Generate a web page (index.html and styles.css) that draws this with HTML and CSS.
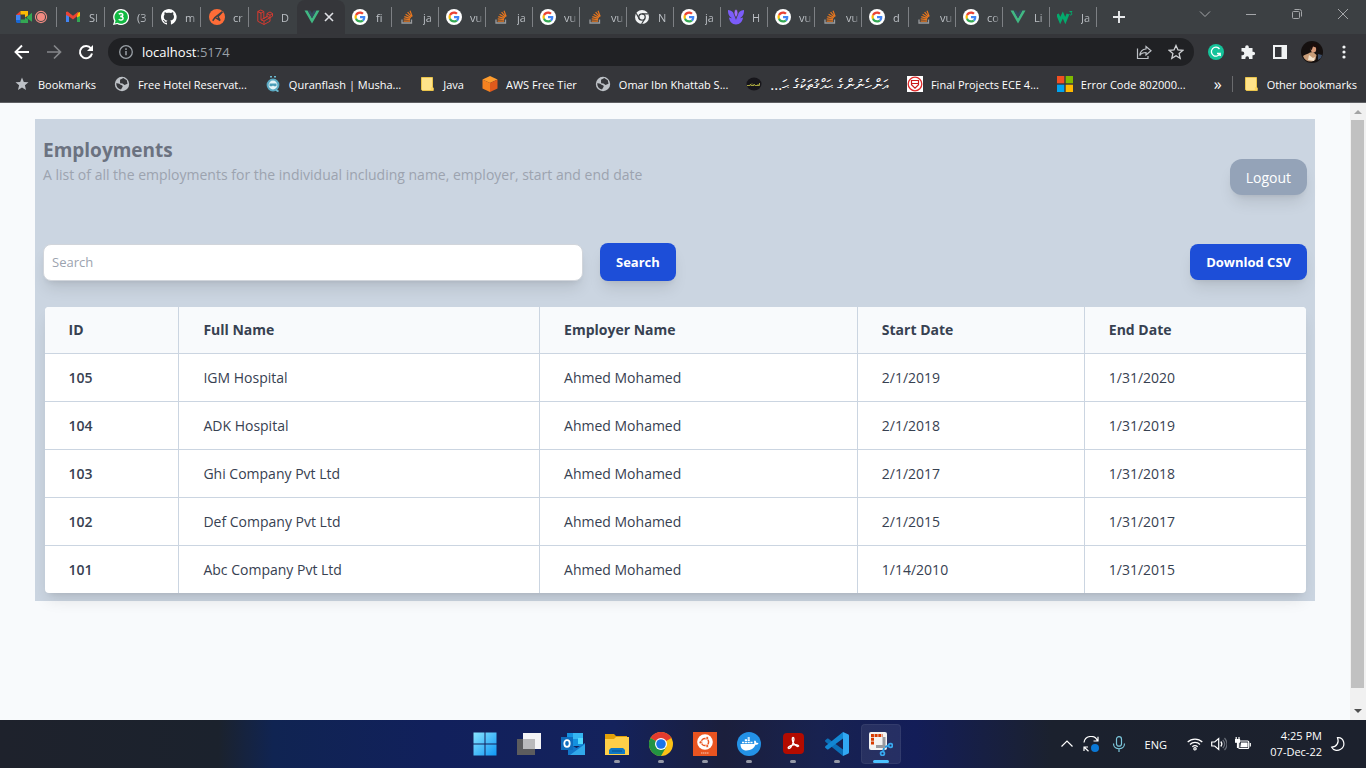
FILE: index.html
```html
<!DOCTYPE html>
<html lang="en">
<head>
<meta charset="utf-8">
<title>Employments</title>
<link rel="stylesheet" href="styles.css">
</head>
<body>
<svg class="defs" aria-hidden="true">
  <symbol id="google" viewBox="0 0 16 16"><circle cx="8" cy="8" r="8" fill="#fff"/><g transform="translate(2.500 2.500) scale(.230)"><path fill="#ea4335" d="M24 9.500c3.540 0 6.710 1.220 9.210 3.600l6.850-6.850C35.900 2.380 30.470 0 24 0 14.620 0 6.510 5.380 2.560 13.220l7.980 6.190C12.430 13.720 17.740 9.500 24 9.500z"/><path fill="#4285f4" d="M46.980 24.550c0-1.570-.15-3.090-.38-4.550H24v9.020h12.940c-.58 2.960-2.260 5.480-4.780 7.180l7.730 6c4.510-4.180 7.090-10.360 7.090-17.650z"/><path fill="#fbbc05" d="M10.530 28.590c-.48-1.450-.76-2.990-.76-4.590s.27-3.140.76-4.590l-7.980-6.190C.920 16.460 0 20.120 0 24c0 3.880.92 7.540 2.560 10.780l7.970-6.190z"/><path fill="#34a853" d="M24 48c6.480 0 11.930-2.130 15.890-5.810l-7.730-6c-2.150 1.450-4.920 2.300-8.160 2.300-6.260 0-11.570-4.220-13.470-9.910l-7.980 6.190C6.510 42.620 14.620 48 24 48z"/></g></symbol>
  <symbol id="stack" viewBox="0 0 16 16"><path d="M3 10.500V14h9.500v-3.500" fill="none" stroke="#9a9c9f" stroke-width="1.300"/><g stroke="#e8771f" stroke-width="1.200"><path d="M4.600 12.100h6.400M4.700 9.900l6.300.8M5.300 7.600l6 1.800M6.600 5.300l5.400 3.200M8.600 3.200l4.100 4.700M11 1.800l2.200 5.700"/></g></symbol>
  <symbol id="vue" viewBox="0 0 16 16"><path d="M.500 1.500H3.600L8 9.200l4.400-7.700h3.100L8 14.600z" fill="#41b883"/><path d="M3.600 1.500h2.700L8 4.500l1.700-3h2.700L8 9.200z" fill="#34495e"/></symbol>
  <symbol id="globe" viewBox="0 0 16 16"><circle cx="8" cy="8" r="7.200" fill="#bdc1c6"/><path d="M2.200 7.200c2.200-.3 3.600.7 4.900 1.800 1.400.3 2 1 1.400 2.100L7 13.600C4 13 2.100 10.500 2.200 7.200zM6 3.700l3.300-1.600 3.500 2.100.7 3.500-3 1.300-2-1.500-2.400-.3z" fill="#35363a"/></symbol>
  <symbol id="folder" viewBox="0 0 16 16"><path d="M2.500 1.500h11v9.700l.8.8v2.500h-11l-.8-.8z" fill="#ffe38a" stroke="#eac44b"/><path d="M11.800 11.200h2v3h-2z" fill="#ffd65e"/></symbol>
</svg>

<header class="browser">
  <nav class="tabs" aria-label="Tabs">
    <button class="tab tab-first" aria-label="Meet"><svg viewBox="0 0 16 16"><path d="M0 6l4.500-4v4z" fill="#ea4335"/><path d="M4.500 2H12v4.500L9 8.500V5.500H4.500z" fill="#fbbc04"/><path d="M0 6h4.500v5H0z" fill="#4285f4"/><path d="M0 11h4.500v3H1l-1-1z" fill="#1967d2"/><path d="M4.500 10.500H9v-2l3 2V14H4.500zM11 7.700l5-4v9l-5-3.400z" fill="#34a853"/></svg><svg viewBox="0 0 16 16"><circle cx="8" cy="8" r="5.600" fill="none" stroke="#f28b82" stroke-width="1.100"/><circle cx="8" cy="8" r="4" fill="#f28b82"/></svg></button>
    <button class="tab wide"><svg viewBox="0 0 16 16"><path d="M1 3v10h3V6z" fill="#4285f4"/><path d="M15 3v10h-3V6z" fill="#34a853"/><path d="M12 4l3-1v4l-3 1.500z" fill="#fbbc04"/><path d="M1 3l1.500-.6L8 6.800l5.500-4.400L12 7.300 8 10.500 4 7.500 1 6z" fill="#ea4335"/></svg><span>SI</span></button>
    <button class="tab wide"><svg viewBox="0 0 16 16"><path d="M8 0a8 8 0 1 1-3.800 15L0 16l1.200-4A8 8 0 0 1 8 0z" fill="#fff"/><path d="M8 1.200a6.800 6.800 0 1 1-3.500 12.600L1.800 14.400l.8-2.700A6.800 6.800 0 0 1 8 1.200z" fill="#12b942"/><path d="M5.800 5.200C7 4 10 4.200 9.800 6c-.1 1.300-1.300 1.500-2.600 1.500 1.500 0 2.900.4 2.900 1.800 0 2-3 2.300-4.400 1" fill="none" stroke="#fff" stroke-width="1.500"/></svg><span>(3</span></button>
    <button class="tab wide"><svg viewBox="0 0 16 16"><path fill="#fff" d="M8 0C3.600 0 0 3.600 0 8c0 3.500 2.300 6.500 5.500 7.600.4.100.5-.2.500-.4v-1.500c-2 .4-2.700-.5-2.900-1-.1-.2-.5-1-.8-1.100-.3-.2-.7-.5 0-.5s1.100.6 1.200.8c.7 1.200 1.900.9 2.400.7.100-.5.300-.9.500-1.100-1.800-.2-3.600-.9-3.600-4 0-.9.300-1.600.8-2.100-.1-.2-.4-1 .1-2.100 0 0 .7-.2 2.200.8.600-.2 1.300-.3 2-.3s1.400.1 2 .3c1.500-1 2.200-.8 2.200-.8.400 1.100.2 1.900.1 2.100.5.600.8 1.300.8 2.100 0 3.100-1.900 3.700-3.700 3.900.3.300.6.800.6 1.500v2.200c0 .2.100.5.500.4A8 8 0 0 0 8 0z"/></svg><span>m</span></button>
    <button class="tab wide"><svg viewBox="0 0 16 16"><circle cx="8" cy="8" r="8" fill="#ff6c37"/><path d="M13.500 2.700L6.200 8.300M6.200 8.300l5 3.200M11.200 11.500L9 7.500M9 7.500l4.500-4.800M6.200 8.300l-2.500 3.500" fill="none" stroke="#3c4043" stroke-width="1.500"/></svg><span>cr</span></button>
    <button class="tab wide no-line"><svg viewBox="0 0 16 16" fill="none" stroke="#d23a30" stroke-width="1"><path d="M.800 2.500l3-1.500 3 1.500v7L10 7.500M.800 2.500v9.800L7 15.500l6-3.200V8.700l2.500-1.500V4.500L13 3 10 4.500v3l-6 3.400V4.200zM4 4.200l2.800-1.700M.800 2.500L4 4.200M10 4.500l3 1.700v2.500l-3-1.200M13 6.200l2.500-1.700M7 12.100v3.400M4 10.900l3 1.200 6-3.400"/></svg><span>D</span></button>
    <button class="tab active" aria-current="page"><svg><use href="#vue"/></svg><svg class="close" viewBox="0 0 16 16"><path d="M4 4l8 8M12 4l-8 8" stroke="#dfe1e5" stroke-width="1.600"/></svg></button>
    <button class="tab"><svg><use href="#google"/></svg><span>fi</span></button>
    <button class="tab"><svg><use href="#stack"/></svg><span>ja</span></button>
    <button class="tab"><svg><use href="#google"/></svg><span>vu</span></button>
    <button class="tab"><svg><use href="#stack"/></svg><span>ja</span></button>
    <button class="tab"><svg><use href="#google"/></svg><span>vu</span></button>
    <button class="tab"><svg><use href="#stack"/></svg><span>vu</span></button>
    <button class="tab"><svg viewBox="0 0 16 16"><circle cx="8" cy="8" r="7" fill="#f1f3f4"/><circle cx="8" cy="8" r="3.200" fill="none" stroke="#3c4043" stroke-width="1.300"/><path d="M8 4.800h6.200M5.200 9.600L2.200 4.300M10.800 9.600L7.600 15" stroke="#3c4043" stroke-width="1.200"/></svg><span>N</span></button>
    <button class="tab"><svg><use href="#google"/></svg><span>ja</span></button>
    <button class="tab"><svg viewBox="0 0 16 16"><path d="M0 1c3.500.3 5.500 2 6.500 5 .6 1.700.8 3.500 1.500 5 .7-1.500.9-3.300 1.500-5 1-3 3-4.700 6.500-5 .3 4.500-1.500 7-4.200 8.300 1.200-.1 2.200-.3 3.200-.8-.5 4-3 7-7 7s-6.500-3-7-7c1 .5 2 .7 3.200.8C1.500 8 -.3 5.500 0 1z" fill="#7b5cfa"/><path d="M8 0c2.600 2.200 2.600 5.500 0 8.500C5.400 5.500 5.400 2.200 8 0z" fill="#a06bff" stroke="#3c4043" stroke-width=".800"/></svg><span>H</span></button>
    <button class="tab"><svg><use href="#google"/></svg><span>vu</span></button>
    <button class="tab"><svg><use href="#stack"/></svg><span>vu</span></button>
    <button class="tab"><svg><use href="#google"/></svg><span>d</span></button>
    <button class="tab"><svg><use href="#stack"/></svg><span>vu</span></button>
    <button class="tab"><svg><use href="#google"/></svg><span>co</span></button>
    <button class="tab"><svg><use href="#vue"/></svg><span>Li</span></button>
    <button class="tab"><svg viewBox="0 0 16 16"><path d="M.500 5l2.700 6.500L5.800 6l2.500 5.500L11 5" fill="none" stroke="#04aa6d" stroke-width="3"/><path d="M12.500 2.500H15l-1.200 1.400c1.600.2 1.300 2.200-.1 2.100-.6 0-1-.3-1.300-.7" fill="none" stroke="#04aa6d"/></svg><span>Ja</span></button>
    <button class="new-tab" aria-label="New tab"><svg viewBox="0 0 16 16"><path d="M8 2v12M2 8h12" stroke="#e8eaed" stroke-width="1.900"/></svg></button>
    <div class="window-buttons">
      <button aria-label="Search tabs"><svg viewBox="0 0 16 16"><path d="M3 5.500l5 5 5-5"/></svg></button>
      <button aria-label="Minimize"><svg viewBox="0 0 16 16"><path d="M3 8.500h10"/></svg></button>
      <button aria-label="Restore"><svg viewBox="0 0 16 16"><rect x="3.500" y="5.500" width="7" height="7" rx="1"/><path d="M5.500 3.500h5a2 2 0 0 1 2 2v5"/></svg></button>
      <button aria-label="Close"><svg viewBox="0 0 16 16"><path d="M3 3l10 10M13 3L3 13"/></svg></button>
    </div>
  </nav>

  <div class="toolbar">
    <button class="tool" aria-label="Back"><svg viewBox="0 0 16 16"><path d="M15 8H2M8 1.500L1.500 8 8 14.500" fill="none" stroke="#fff" stroke-width="1.900"/></svg></button>
    <button class="tool" aria-label="Forward"><svg viewBox="0 0 16 16"><path d="M1 8h13M8 1.500L14.500 8 8 14.500" fill="none" stroke="#85878a" stroke-width="1.700"/></svg></button>
    <button class="tool" aria-label="Reload"><svg viewBox="0 0 16 16"><path d="M13 4.500A6.100 6.100 0 1 0 14 9.500" fill="none" stroke="#fff" stroke-width="2"/><path d="M15 1v6H9z" fill="#fff"/></svg></button>
    <div class="omnibox">
      <svg viewBox="0 0 16 16"><circle cx="8" cy="8" r="6.300" fill="none" stroke="#9aa0a6" stroke-width="1.300"/><path d="M8 7v4.300M8 4.300v1.600" stroke="#9aa0a6" stroke-width="1.500"/></svg>
      <div class="address" role="textbox" contenteditable="true" aria-label="Address" spellcheck="false">localhost<span>:5174</span></div>
      <button class="tool" aria-label="Share"><svg viewBox="0 0 16 16" fill="none" stroke="#bdc1c6" stroke-width="1.200"><path d="M1.500 4.500v10h10.500v-2.500"/><path d="M10 2.500l5 4.300-5 4.200V8.500C7 8.500 5 9.500 3.800 11.500 4.200 7.500 6.500 5.200 10 5z"/></svg></button>
      <button class="tool" aria-label="Bookmark this tab"><svg viewBox="0 0 16 16"><path d="M8 1.500l2 4.500 4.800.4-3.700 3.200 1.100 4.700L8 11.800l-4.200 2.500 1.100-4.700L1.200 6.400 6 6z" fill="none" stroke="#d0d2d5" stroke-width="1.300"/></svg></button>
    </div>
    <button class="tool" aria-label="Grammarly"><svg viewBox="0 0 16 16"><circle cx="8" cy="8" r="8" fill="#15c39a"/><path d="M11.500 5A4.500 4.500 0 1 0 12 9.500H9M12.200 8.800V12" fill="none" stroke="#fff" stroke-width="1.300"/></svg></button>
    <button class="tool" aria-label="Extensions"><svg viewBox="0 0 16 16"><path d="M1.500 4h3.700V3a1.800 1.800 0 0 1 3.600 0v1h3.700v3.700h.8a1.800 1.800 0 0 1 0 3.600h-.8V15H9v-1a1.800 1.800 0 0 0-3.600 0v1H1.500v-3.800h1a1.800 1.800 0 0 0 0-3.600h-1z" fill="#f1f3f4"/></svg></button>
    <button class="tool" aria-label="Side panel"><svg viewBox="0 0 16 16"><path d="M1 1h14v14H1zM3 3v10h6.500V3z" fill="#f1f3f4" fill-rule="evenodd"/></svg></button>
    <button class="tool profile" aria-label="Profile"><svg viewBox="0 0 22 22"><circle cx="11" cy="11" r="11" fill="#15100f"/><path d="M2 15c2-2 5-1.500 7-3.500l3-.5 3.500 3-1 4.500C11 22 4 21 2 15z" fill="#c99d78"/><ellipse cx="12.500" cy="8" rx="2.700" ry="3.600" fill="#d79a78"/><path d="M9.500 7c-1-5 5-7 7.500-2.500 1 2 .5 4-.5 5.500L15 6.500l-3-1-1.500 4z" fill="#1a0d0b"/><path d="M17 13l4 1-1 3-3 2z" fill="#3c4d67"/><path d="M8 14l4 3 2-1-1 4-6-1z" fill="#f3e3cd"/></svg></button>
    <button class="tool" aria-label="Menu"><svg viewBox="0 0 16 16" fill="#f1f3f4"><circle cx="8" cy="3" r="1.600"/><circle cx="8" cy="8" r="1.600"/><circle cx="8" cy="13" r="1.600"/></svg></button>
  </div>

  <nav class="bookmarks" aria-label="Bookmarks">
    <a href="#"><svg viewBox="0 0 16 16"><path d="M8 1.500l1.800 4.400 4.700.4-3.600 3 1.100 4.700L8 11.500 4 14l1.100-4.700-3.600-3 4.700-.4z" fill="#bdc1c6"/></svg>Bookmarks</a>
    <a href="#"><svg><use href="#globe"/></svg>Free Hotel Reservat...</a>
    <a href="#"><svg viewBox="0 0 16 16"><path d="M5 .800h2M9 .800h2" stroke="#6cb9cf" stroke-width="1.600"/><circle cx="8" cy="9" r="5.400" fill="#e6f5f8" stroke="#5aa9c2" stroke-width="2"/><path d="M4.500 7.500h7v2.700H9L8 9.400l-1 .8H4.500z" fill="#4a9db8"/><path d="M11 14l2.500 1.500" stroke="#6cb9cf" stroke-width="1.800"/></svg>Quranflash | Musha...</a>
    <a href="#"><svg><use href="#folder"/></svg>Java</a>
    <a href="#"><svg viewBox="0 0 16 16"><path d="M8 0l7.500 3.500L8 7 .500 3.500z" fill="#ff9d2e"/><path d="M.500 3.500L8 7v9L.500 12.500z" fill="#f58220"/><path d="M15.500 3.500L8 7v9l7.500-3.500z" fill="#e05a1c"/></svg>AWS Free Tier</a>
    <a href="#"><svg><use href="#globe"/></svg>Omar Ibn Khattab S...</a>
    <a href="#"><svg viewBox="0 0 16 16"><ellipse cx="8" cy="8" rx="7.500" ry="6.500" fill="#17161b"/><path d="M1 9.500h3l.5-1.500.5 1.500h3V8l1 1.500h4.500V7M12 8v2M6 7.500v1" fill="none" stroke="#a5a33f"/></svg><bdi lang="dv" dir="rtl">އަންހެނުންގެ ޙައްޤުތަކުގެ ޙަ...</bdi></a>
    <a href="#"><svg viewBox="0 0 16 16"><path d="M0 0h16v16H0z" fill="#fff"/><circle cx="8" cy="8" r="6.800" fill="none" stroke="#e02b2b" stroke-width="1.300"/><path d="M4.500 4.500h7v4.300L8 12.200 4.500 8.800zM4.500 7.500h7" fill="none" stroke="#c91c1c" stroke-width="1.200"/></svg>Final Projects ECE 4...</a>
    <a href="#"><svg viewBox="0 0 16 16"><path d="M0 0h7.300v7.300H0z" fill="#f25022"/><path d="M8.700 0H16v7.300H8.700z" fill="#7fba00"/><path d="M0 8.700h7.300V16H0z" fill="#00a4ef"/><path d="M8.700 8.700H16V16H8.700z" fill="#ffb900"/></svg>Error Code 802000...</a>
    <div class="bookmarks-end">
      <button class="more" aria-label="More bookmarks">»</button>
      <a href="#" class="other"><svg><use href="#folder"/></svg>Other bookmarks</a>
    </div>
  </nav>
</header>

<div class="viewport">
  <main class="page">
    <section class="panel">
      <div class="panel-head">
        <div>
          <h1>Employments</h1>
          <p>A list of all the employments for the individual including name, employer, start and end date</p>
        </div>
        <button class="btn logout">Logout</button>
      </div>
      <form class="actions">
        <input type="text" class="search" placeholder="Search" aria-label="Search">
        <button type="button" class="btn primary submit">Search</button>
        <button type="button" class="btn primary csv">Downlod CSV</button>
      </form>
      <table>
        <colgroup><col class="c-id"><col class="c-name"><col class="c-employer"><col class="c-start"><col class="c-end"></colgroup>
        <thead><tr><th>ID</th><th>Full Name</th><th>Employer Name</th><th>Start Date</th><th>End Date</th></tr></thead>
        <tbody>
          <tr><th scope="row">105</th><td>IGM Hospital</td><td>Ahmed Mohamed</td><td>2/1/2019</td><td>1/31/2020</td></tr>
          <tr><th scope="row">104</th><td>ADK Hospital</td><td>Ahmed Mohamed</td><td>2/1/2018</td><td>1/31/2019</td></tr>
          <tr><th scope="row">103</th><td>Ghi Company Pvt Ltd</td><td>Ahmed Mohamed</td><td>2/1/2017</td><td>1/31/2018</td></tr>
          <tr><th scope="row">102</th><td>Def Company Pvt Ltd</td><td>Ahmed Mohamed</td><td>2/1/2015</td><td>1/31/2017</td></tr>
          <tr><th scope="row">101</th><td>Abc Company Pvt Ltd</td><td>Ahmed Mohamed</td><td>1/14/2010</td><td>1/31/2015</td></tr>
        </tbody>
      </table>
    </section>
  </main>
  <div class="scrollbar" aria-hidden="true">
    <svg viewBox="0 0 16 17"><path d="M4 11h8L8 7z" fill="#a3a3a3"/></svg>
    <div class="thumb"></div>
    <div class="track"></div>
    <svg viewBox="0 0 16 17"><path d="M4 6h8l-4 4z" fill="#505050"/></svg>
  </div>
</div>

<footer class="taskbar">
  <div class="apps">
    <button aria-label="Start"><svg viewBox="0 0 24 24"><defs><linearGradient id="win" gradientUnits="userSpaceOnUse" x1="0" y1="0" x2="24" y2="24"><stop stop-color="#8be6ff"/><stop offset="1" stop-color="#0c95f4"/></linearGradient></defs><path d="M.500.500h11v11H.500zM12.500.500h11v11h-11zM.500 12.500h11v11H.500zM12.500 12.500h11v11h-11z" fill="url(#win)"/></svg></button>
    <button aria-label="Task view"><svg viewBox="0 0 24 24"><path d="M6 1h18v16H6z" fill="#f4f4f6"/><path d="M0 7h18v16H0z" fill="#5c5c5e"/><path d="M6 7h12v10H6z" fill="#bababc"/></svg></button>
    <button aria-label="Outlook"><svg viewBox="0 0 24 24"><path d="M6 1h16v13H6z" fill="#1490df"/><path d="M12 1h10v6H12z" fill="#35b5f1"/><path d="M17 6h5v6h-5z" fill="#50d9ff"/><path d="M6 6h6v6H6z" fill="#0a5fa8"/><path d="M7 11l8.500 5L24 11v12H7z" fill="#1276ca"/><path d="M24 12v11H9z" fill="#31a9eb"/><path d="M0 5h12v13H0z" fill="#0f6cbd"/><ellipse cx="6" cy="11.500" rx="2.700" ry="3.300" fill="none" stroke="#fff" stroke-width="1.800"/></svg></button>
    <button class="open" aria-label="File Explorer"><svg viewBox="0 0 24 24"><path d="M0 2h9l2 2h11v6H0z" fill="#e3a008"/><path d="M0 7h9l2-2h13v18H0z" fill="#ffcf48"/><path d="M4 22v-4l2-2h12l2 2v4z" fill="#0f78c4"/><path d="M7 19h10" stroke="#064f8e"/></svg></button>
    <button class="open" aria-label="Chrome"><svg viewBox="0 0 24 24"><circle cx="12" cy="12" r="12" fill="#fbc116"/><path d="M12 12L1.600 6A12 12 0 0 1 22.400 6z" fill="#e33b2e"/><path d="M1.600 6A12 12 0 0 0 12 24l5.200-9L12 12z" fill="#229342"/><circle cx="12" cy="12" r="6" fill="#fff"/><circle cx="12" cy="12" r="4.800" fill="#1a73e8"/></svg></button>
    <button class="open" aria-label="Ubuntu"><svg viewBox="0 0 24 24"><path d="M0 0h24v24H0z" fill="#e95420"/><circle cx="12" cy="10" r="7.800" fill="#fff"/><circle cx="12" cy="10" r="3.600" fill="none" stroke="#e95420" stroke-width="1.500"/><g fill="#e95420" stroke="#fff" stroke-width=".700"><circle cx="7.600" cy="10.300" r="1.500"/><circle cx="14.200" cy="6" r="1.500"/><circle cx="14.200" cy="14" r="1.500"/></g><path d="M8 21h8" stroke="#f9c5b2" stroke-dasharray="1.500 .500"/></svg></button>
    <button class="open" aria-label="Docker"><svg viewBox="0 0 24 24"><circle cx="12" cy="12" r="12" fill="#2391e6"/><path d="M3.500 12h13c1 0 1-1 .5-2 .2-1 .6-1.500 1-1.500 1 .5 1.200 1.500 1.200 2.300 1-.2 2 0 2.300.4-.4 1-1.500 1.600-3 1.600C17 16.500 14 18.500 9.500 18.500c-4 0-6-2.300-6-6.500z" fill="#fff"/><path d="M5 10.500h2.200M7.800 10.500H10M10.600 10.500h2.200M13.400 10.500h2.200M7.800 8.200H10M10.600 8.200h2.200M10.600 6h2.200" stroke="#fff" stroke-width="1.700"/></svg></button>
    <button class="open" aria-label="Acrobat"><svg viewBox="0 0 24 24"><rect x="2" y="1" width="21" height="21" rx="4" fill="#b30b00"/><path d="M12 5.500c1.300 0 1.200 2.300.3 4.700-1 2.800-3 6.300-4.600 6.300-1.700-.5.500-2.800 4.800-3.600 2.500-.4 5.200-.1 5.200 1.100-.8 1.300-3.500-.3-5.200-2.800-1.500-2.300-1.600-5.500-.5-5.700z" fill="none" stroke="#fff" stroke-width="1.300"/></svg></button>
    <button class="open" aria-label="Visual Studio Code"><svg viewBox="0 0 24 24"><path d="M0 8.500l2-1.700c.5-.4 1-.4 1.500 0L18 17.500V24L.300 9.800z" fill="#0b6fb8"/><path d="M0 15.500l2 1.700c.5.400 1 .4 1.500 0L18 6.500V0L.300 14.200z" fill="#1287d3"/><path d="M18 0l5 2.200c.7.300 1 .8 1 1.500v16.600c0 .7-.3 1.200-1 1.500L18 24z" fill="#31a8f2"/></svg></button>
    <button class="open current" aria-label="Snipping Tool"><svg viewBox="0 0 24 24"><rect width="18" height="18" rx="2" fill="#f3f3f3"/><path d="M3.500 12.500v-9h10" fill="none" stroke="#d83b01" stroke-width="3" stroke-dasharray="3 .700"/><path d="M15 5v11M7 14.500h9" stroke="#9a9a9f" stroke-width="3" fill="none"/><path d="M16 15l4-1.500M15 16l-1 4" stroke="#2899e0" stroke-width="2"/><g fill="none" stroke="#38a8ee" stroke-width="1.800"><circle cx="21.500" cy="13.500" r="1.900"/><circle cx="13.500" cy="21.500" r="1.900"/></g></svg></button>
  </div>
  <div class="tray">
    <svg viewBox="0 0 16 16"><path d="M2.500 10.500L8 5l5.500 5.500"/></svg>
    <svg class="sync" viewBox="0 0 16 16"><path d="M1 6.500A7 7 0 0 1 14.500 5M15 .800V5h-4.500M1 15v-4h4M1.500 11.500l4 3.700"/><circle cx="12" cy="12" r="4" fill="#0a78d6" stroke="none"/></svg>
    <svg class="mic" viewBox="0 0 16 16"><rect x="5.500" y=".700" width="5" height="9.500" rx="2.500"/><path d="M2.500 7.500c0 7 11 7 11 0M8 12.800V16"/></svg>
    <span class="lang">ENG</span>
    <button class="status" aria-label="Network, volume and battery">
      <svg viewBox="0 0 16 16"><path d="M.700 6a10.500 10.500 0 0 1 14.600 0M3 8.500a7 7 0 0 1 10 0M5.300 10.800a4 4 0 0 1 5.400 0"/><circle cx="8" cy="12.800" r="1.200"/></svg>
      <svg viewBox="0 0 16 16"><path d="M.700 6h3l4-3.500v11L3.700 10h-3zM9.800 5.500c1.300 1.500 1.300 3.500 0 5"/><path d="M11.800 3.800c2.300 2.600 2.300 5.800 0 8.400M13.500 2c3.200 3.800 3.200 8.200 0 12" stroke="#696e78"/></svg>
      <svg viewBox="0 0 16 16"><rect x="3.700" y="5" width="10" height="7.500" rx="1"/><path d="M6.500 7h5.500v3.700H6zM15.300 7v3.500" fill="#fff"/><path d="M.500 3.500h4v2.700h-4zM1.200 1v2.500M4 1v2.500M2.500 6v6" fill="#fff"/></svg>
    </button>
    <time class="clock"><span>4:25 PM</span><span>07-Dec-22</span></time>
    <svg viewBox="0 0 16 16"><path d="M7.500 1.700c6.500-.7 8.800 8.300 3.200 11.500-3.800 2.200-7.500.8-9-2C6.500 11 9.500 6.500 7.500 1.700z"/></svg>
  </div>
</footer>
</body>
</html>
```

FILE: styles.css
```css
* { box-sizing: border-box; }

body {
  margin: 0;
  height: 100vh;
  display: flex;
  flex-direction: column;
  overflow: hidden;
  background: #f8fafc;
  font-family: "Open Sans", "Noto Sans", sans-serif;
}

button {
  font-family: inherit;
  border: 0;
  padding: 0;
  background: none;
  cursor: pointer;
}

svg {
  display: block;
  width: 16px;
  height: 16px;
  flex: none;
}

.defs { display: none; }

/* Browser chrome */
.browser {
  background: #35363a;
  color: #fff;
  border-bottom: 1px solid #5f6064;
}

.tabs {
  display: flex;
  height: 34px;
  background: #3c4043;
}

.tab {
  display: flex;
  align-items: center;
  gap: 8px;
  width: 47px;
  flex: none;
  padding-left: 7px;
  color: #bdc1c6;
  font-size: 11px;
  background: linear-gradient(#7d8084, #7d8084) right center / 1px 20px no-repeat;
}

.tab.wide {
  width: 48px;
  padding-left: 8px;
}

.tab.no-line { background: none; }

.tab span {
  white-space: nowrap;
  -webkit-mask-image: linear-gradient(90deg, #000 6px, transparent 14px);
  mask-image: linear-gradient(90deg, #000 6px, transparent 14px);
}

.tab-first {
  width: 57px;
  padding-left: 16px;
  gap: 1px;
}

.tab.active {
  width: 48px;
  gap: 1px;
  background: #35363a;
  border-radius: 8px 8px 0 0;
}

.new-tab {
  width: 44px;
  display: grid;
  place-items: center;
}

.window-buttons {
  display: flex;
  margin-left: auto;
  height: 28px;
}

.window-buttons button {
  width: 46px;
  display: grid;
  place-items: center;
}

.window-buttons svg {
  fill: none;
  stroke: #a4a6a9;
}

.toolbar {
  display: flex;
  align-items: center;
  height: 36px;
  padding: 0 6px;
}

.tool {
  width: 32px;
  height: 28px;
  flex: none;
  display: grid;
  place-items: center;
}

.profile svg {
  width: 22px;
  height: 22px;
}

.omnibox {
  flex: 1;
  display: flex;
  align-items: center;
  height: 28px;
  margin: 0 6px;
  padding: 0 2px 0 10px;
  border-radius: 14px;
  background: #202124;
}

.address {
  flex: 1;
  padding-left: 8px;
  font-size: 13px;
  outline: 0;
}

.address span { color: #9aa0a6; }

.bookmarks {
  display: flex;
  align-items: center;
  gap: 18px;
  height: 32px;
  padding: 0 10px 4px 14px;
  font-size: 11px;
}

.bookmarks a {
  display: flex;
  align-items: center;
  gap: 8px;
  color: #fff;
  text-decoration: none;
  white-space: nowrap;
}

.bookmarks bdi {
  font-size: 15px;
  line-height: 20px;
}

.bookmarks-end {
  display: flex;
  align-items: center;
  margin-left: auto;
}

.more {
  color: #fff;
  font-size: 16px;
  width: 28px;
}

.bookmarks .other {
  padding-left: 10px;
  border-left: 1px solid #6a6b6e;
}

/* Page */
.viewport {
  flex: 1;
  min-height: 0;
  display: flex;
}

.page {
  flex: 1;
  padding: 16px;
}

.panel {
  max-width: 1280px;
  margin: 0 auto;
  padding: 16px 8px 8px;
  background: #cbd5e1;
}

.panel-head {
  display: flex;
  justify-content: space-between;
  align-items: flex-end;
  height: 60px;
}

.panel-head > div { align-self: flex-start; }

h1 {
  margin: 0;
  color: #6b7280;
  font-size: 19px;
  line-height: 30px;
}

.panel-head p {
  margin: 0;
  color: #9ca3af;
  font-size: 14px;
  line-height: 20px;
}

.btn {
  height: 36px;
  padding: 0 16px;
  border-radius: 8px;
  color: #fff;
  font-size: 13px;
  font-weight: 700;
  box-shadow: 0 10px 15px -3px rgba(0, 0, 0, .1), 0 4px 6px -4px rgba(0, 0, 0, .1);
}

.logout {
  border-radius: 12px;
  background: #94a3b8;
  font-size: 14px;
  font-weight: 400;
}

.primary { background: #1d4ed8; }

.actions {
  display: flex;
  align-items: center;
  margin-top: 48px;
}

.search {
  flex: 0 1 540px;
  height: 37px;
  margin-right: 17px;
  padding: 0 8px;
  border: 1px solid #d1d5db;
  border-radius: 8px;
  background: #fff;
  font-family: inherit;
  font-size: 13px;
  box-shadow: 0 10px 15px -3px rgba(0, 0, 0, .1), 0 4px 6px -4px rgba(0, 0, 0, .1);
}

.search::placeholder { color: #9ca3af; }
.submit { height: 38px; }
.csv { margin-left: auto; }

table {
  width: calc(100% - 3px);
  height: 286px;
  margin: 26px auto 0;
  border-spacing: 0;
  table-layout: fixed;
  border-radius: 4px;
  overflow: hidden;
  background: #fff;
  color: #374151;
  font-size: 14px;
  text-align: left;
  box-shadow: 0 10px 15px -3px rgba(0, 0, 0, .1), 0 4px 6px -4px rgba(0, 0, 0, .1);
}

.c-id { width: 10.7%; }
.c-name { width: 28.6%; }
.c-employer { width: 25.2%; }
.c-start { width: 18%; }
.c-end { width: 17.5%; }

th, td {
  padding: 12px 24px;
  line-height: 22px;
  border-right: 1px solid #cbd5e1;
  border-bottom: 1px solid #cbd5e1;
}

th:last-child, td:last-child { border-right: 0; }
tbody tr:last-child > * { border-bottom: 0; }
thead th { background: #f8fafc; }
tbody th { font-weight: 600; }

.scrollbar {
  width: 16px;
  display: flex;
  flex-direction: column;
  background: #f1f1f1;
}

.scrollbar svg { height: 17px; }

.thumb {
  flex: 568;
  margin: 0 2px 0 1px;
  background: #c1c1c1;
}

.track { flex: 15; }

/* Taskbar */
.taskbar {
  display: grid;
  grid-template-columns: 1fr auto 1fr;
  align-items: center;
  height: 48px;
  color: #fff;
  background: linear-gradient(90deg, #1e222c 0, #1b222d 16%, #102452 20%, #11205c 32%, #14225c 45%, #1b1f3c 53%, #182250 60%, #131d58 67%, #1b212e 77%, #1c212d 100%);
}

.apps {
  grid-column: 2;
  display: flex;
  gap: 4px;
}

.apps button {
  position: relative;
  width: 40px;
  height: 40px;
  display: grid;
  place-items: center;
  border-radius: 4px;
}

.apps svg {
  width: 24px;
  height: 24px;
}

.open::after {
  content: "";
  position: absolute;
  bottom: 1px;
  left: 50%;
  width: 6px;
  height: 3px;
  margin-left: -3px;
  border-radius: 2px;
  background: #9498a6;
}

.apps .current {
  background: rgba(255, 255, 255, .08);
  box-shadow: inset 0 0 0 1px rgba(255, 255, 255, .06);
}

.current::after {
  width: 16px;
  margin-left: -8px;
  background: #4cc2ff;
}

.tray {
  display: flex;
  align-items: center;
  justify-content: flex-end;
  padding-right: 20px;
  font-size: 11px;
}

.tray svg {
  fill: none;
  stroke: #fff;
  stroke-width: 1.2;
}

.tray .sync { margin-left: 8px; }

.tray .mic {
  margin: 0 18px 0 12px;
  stroke: #7cc7dc;
}

.status {
  display: flex;
  gap: 8px;
  margin: 0 15px 0 20px;
}

.clock {
  display: flex;
  flex-direction: column;
  align-items: flex-end;
  min-width: 56px;
  margin-right: 8px;
  line-height: 16px;
}
```
